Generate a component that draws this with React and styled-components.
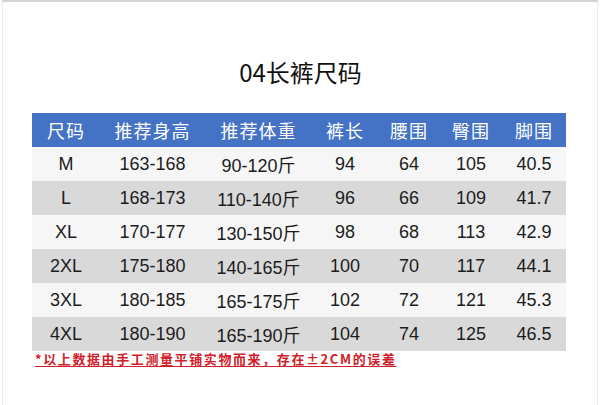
import React from 'react';
import styled, { createGlobalStyle } from 'styled-components';

const GlobalStyle = createGlobalStyle`
  html, body {
    margin: 0;
    padding: 0;
    background: #fff;
  }
  body {
    font-family: "Liberation Sans", "Noto Sans CJK SC", sans-serif;
  }
`;

const Page = styled.div`
  width: 596px;
  height: 405px;
  box-sizing: border-box;
  margin: 0 2px;
  border-top: 2px solid #d4d4d4;
  border-left: 1px solid #ececec;
  border-right: 1px solid #ececec;
  display: flex;
  flex-direction: column;
  align-items: flex-start;
  padding: 0 0 0 29px;
`;

const Title = styled.h1`
  align-self: stretch;
  margin: 54px 28px 0 0;
  height: 32px;
  line-height: 32px;
  text-align: center;
  font-family: "Noto Sans CJK SC", sans-serif;
  font-weight: 400;
  font-size: 24px;
  color: #111;
`;

const Table = styled.table`
  margin-top: 25px;
  width: 534px;
  border-collapse: collapse;
  table-layout: fixed;
`;

const HeadCell = styled.th`
  width: ${p => p.$w}px;
  height: 34px;
  padding: 0;
  background: #4472c4;
  color: #fff;
  font-family: "Noto Sans CJK SC", sans-serif;
  font-weight: 400;
  font-size: 18px;
  text-align: center;
  letter-spacing: 1px;
`;

const Row = styled.tr`
  background: ${p => (p.$shaded ? '#d9d9d9' : '#f6f6f6')};
`;

const Cell = styled.td`
  height: 34px;
  padding: 0;
  text-align: center;
  font-family: "Liberation Sans", "Noto Sans CJK SC", sans-serif;
  font-size: 18px;
  color: #1c1c1c;
  white-space: nowrap;
`;

const Note = styled.p`
  margin: 0 0 0 3px;
  line-height: 16px;
  font-family: "Noto Sans CJK SC", sans-serif;
  font-size: 13px;
  font-weight: 700;
  letter-spacing: 1.6px;
  color: #d2202a;
  text-decoration: underline;
  text-underline-offset: 2px;
`;

const columns = [
  { label: '尺码', w: 68 },
  { label: '推荐身高', w: 105 },
  { label: '推荐体重', w: 107 },
  { label: '裤长', w: 66 },
  { label: '腰围', w: 62 },
  { label: '臀围', w: 62 },
  { label: '脚围', w: 64 },
];

const rows = [
  ['M', '163-168', '90-120斤', '94', '64', '105', '40.5'],
  ['L', '168-173', '110-140斤', '96', '66', '109', '41.7'],
  ['XL', '170-177', '130-150斤', '98', '68', '113', '42.9'],
  ['2XL', '175-180', '140-165斤', '100', '70', '117', '44.1'],
  ['3XL', '180-185', '165-175斤', '102', '72', '121', '45.3'],
  ['4XL', '180-190', '165-190斤', '104', '74', '125', '46.5'],
];

export default function App() {
  return (
    <>
      <GlobalStyle />
      <Page>
        <Title>04长裤尺码</Title>
        <Table>
          <thead>
            <tr>
              {columns.map(c => (
                <HeadCell key={c.label} $w={c.w}>{c.label}</HeadCell>
              ))}
            </tr>
          </thead>
          <tbody>
            {rows.map((r, i) => (
              <Row key={r[0]} $shaded={i % 2 === 1}>
                {r.map((v, j) => (
                  <Cell key={j}>{v}</Cell>
                ))}
              </Row>
            ))}
          </tbody>
        </Table>
        <Note>*以上数据由手工测量平铺实物而来，存在±2CM的误差</Note>
      </Page>
    </>
  );
}
